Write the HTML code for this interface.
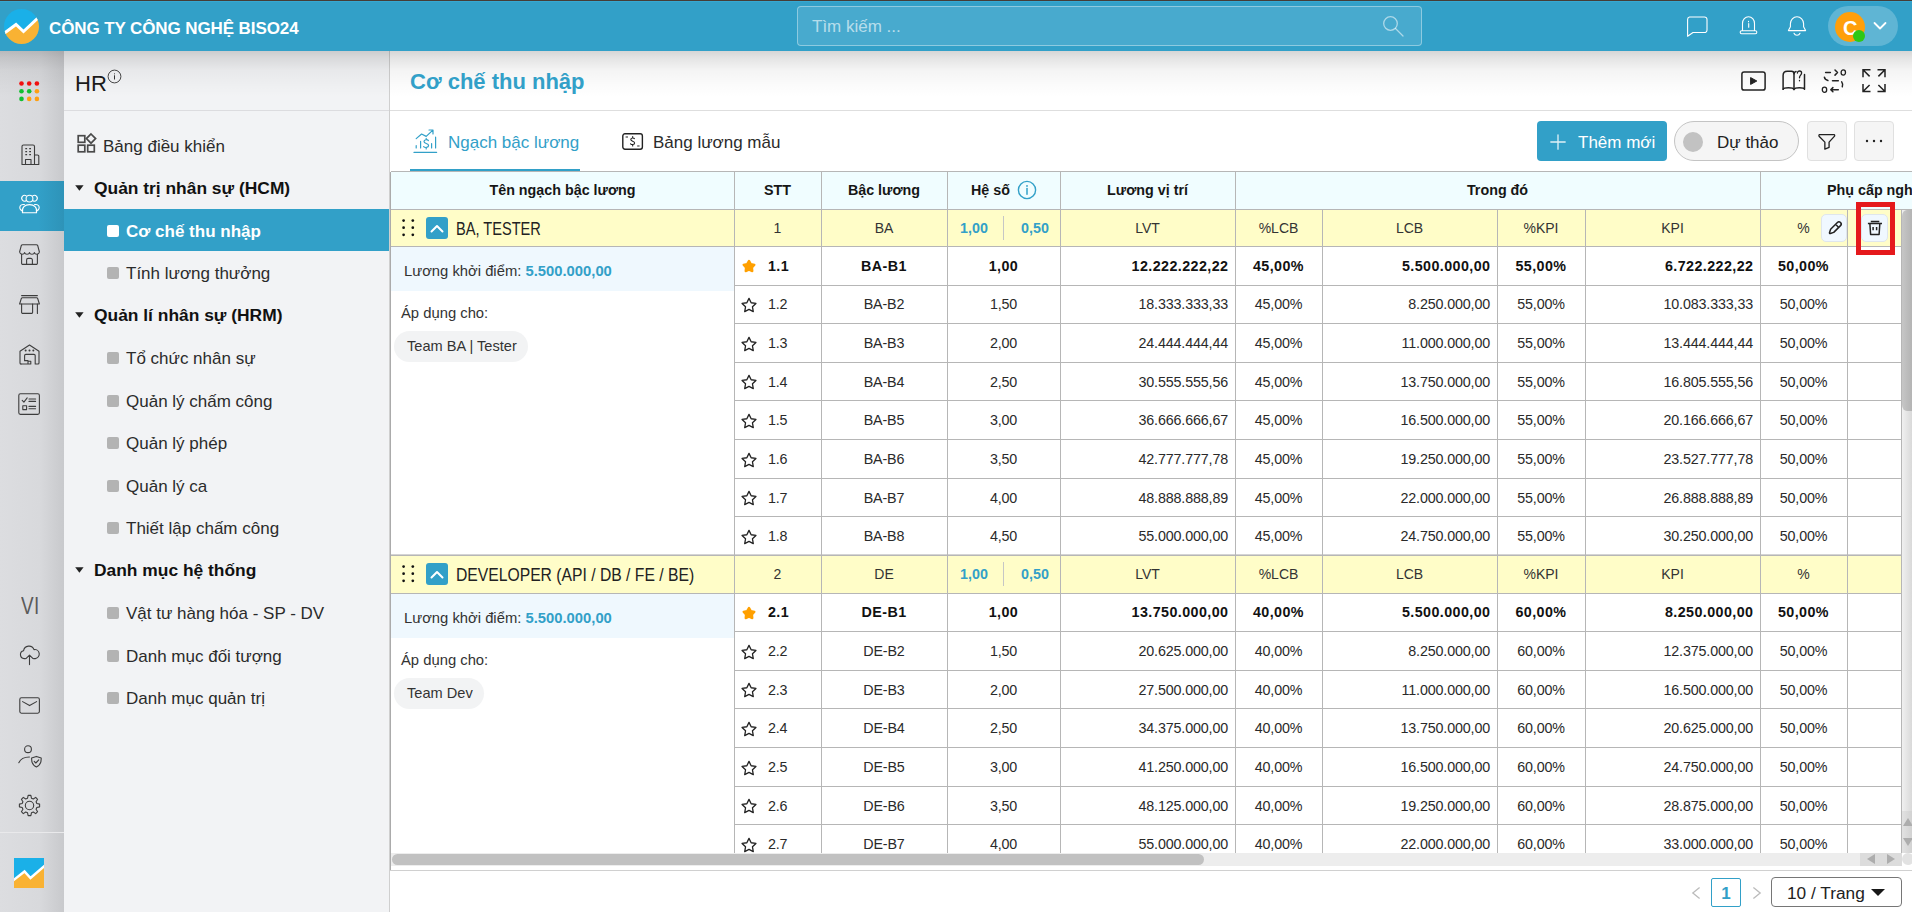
<!DOCTYPE html>
<html lang="vi"><head><meta charset="utf-8"><title>Cơ chế thu nhập</title>
<style>
*{box-sizing:border-box;margin:0;padding:0}
html,body{width:1912px;height:912px;overflow:hidden;background:#fff}
body{font-family:"Liberation Sans",sans-serif;color:#222;position:relative;font-size:14px}
.abs{position:absolute}
.t{position:absolute;white-space:nowrap;line-height:1}
svg{position:absolute;overflow:visible}
#top{left:0;top:0;width:1912px;height:51px;background:#32a0c8}
#topline{left:0;top:0;width:1912px;height:2px;background:linear-gradient(180deg,#463d37 0,#463d37 1px,#36a8d2 1px,#36a8d2 2px)}
#rail{left:0;top:51px;width:64px;height:861px;background:linear-gradient(90deg,#dcdde0 0%,#d8d9dc 62%,#c8c9cc 100%)}
#side{left:64px;top:51px;width:326px;height:861px;background:#f2f3f5;border-right:1px solid #cfcfcf}
#shadow{left:0;top:51px;width:1912px;height:46px;background:linear-gradient(180deg,rgba(0,0,0,.16) 0%,rgba(0,0,0,.11) 14%,rgba(0,0,0,.045) 42%,rgba(0,0,0,.015) 75%,rgba(0,0,0,0) 100%)}
.hl{position:absolute;height:1px;background:#b6b6b6}
.vl{position:absolute;width:1px;background:#b6b6b6}
.c{position:absolute;text-align:center;white-space:nowrap;font-size:14.3px;line-height:16px;color:#2a2a2a;letter-spacing:-0.15px}
.r{position:absolute;text-align:right;white-space:nowrap;font-size:14.3px;line-height:16px;color:#2a2a2a;letter-spacing:-0.15px}
.b{font-weight:700;color:#111}
.sq{position:absolute;width:12px;height:12px;border-radius:2px;background:#b3b3b3}
.mi{position:absolute;white-space:nowrap;font-size:17px;line-height:20px;color:#2b2b2b}
.mg{position:absolute;white-space:nowrap;font-size:17.4px;line-height:20px;color:#111;font-weight:700}
.caret{position:absolute;width:0;height:0;border-left:4.5px solid transparent;border-right:4.5px solid transparent;border-top:5.5px solid #222}

.b{font-weight:700;color:#111;letter-spacing:0.42px}
.r.b{margin-left:0.42px}

.hd{position:absolute;text-align:center;white-space:nowrap;font-size:14.3px;line-height:16px;font-weight:700;color:#161616}
.g{position:absolute;text-align:center;white-space:nowrap;font-size:14px;line-height:16px;color:#333}
.gt{position:absolute;white-space:nowrap;font-size:18px;line-height:20px;color:#222;transform-origin:0 50%}
.bl{color:#32a0c8;font-weight:700}
</style></head>
<body>
<div class="abs" id="top"></div><div class="abs" id="topline"></div>
<svg style="left:4px;top:9px" width="35" height="35" viewBox="0 0 35 35"><defs><clipPath id="lc"><circle cx="17.5" cy="17.5" r="17.5"/></clipPath></defs><g clip-path="url(#lc)"><rect width="35" height="35" fill="#1ab0e8"/><path d="M-1 25 L12 15.5 L19.5 22.5 L36 7 V36 H-1Z" fill="#f9b233"/><path d="M-1 25 L12 15.5 L19.5 22.5 L36 7" fill="none" stroke="#fff" stroke-width="3"/></g></svg>
<div class="t" style="left:49px;top:20px;font-size:17px;font-weight:700;color:#fff;letter-spacing:-0.1px">CÔNG TY CÔNG NGHỆ BISO24</div>
<div class="abs" style="left:797px;top:6px;width:625px;height:40px;border:1px solid rgba(255,255,255,.38);border-radius:4px;background:rgba(255,255,255,.11)"></div>
<div class="t" style="left:812px;top:18px;font-size:17px;color:rgba(255,255,255,.62)">Tìm kiếm ...</div>
<svg style="left:1382px;top:15px" width="22" height="22" viewBox="0 0 22 22"><circle cx="8.5" cy="8.5" r="6.8" fill="none" stroke="rgba(255,255,255,.55)" stroke-width="1.3"/><path d="M13.5 13.5 L21 21" stroke="rgba(255,255,255,.55)" stroke-width="1.3" stroke-linecap="round"/></svg>
<svg style="left:1686px;top:16px" width="22" height="22" viewBox="0 0 22 22"><path d="M3.5 1 H18.5 A2.5 2.5 0 0 1 21 3.5 V14 A2.5 2.5 0 0 1 18.5 16.5 H7 L1.6 20.3 V3.5 A2.5 2.5 0 0 1 3.5 1Z" fill="none" stroke="#fff" stroke-width="1.1" stroke-linecap="round" stroke-linejoin="round"/></svg>
<svg style="left:1738.5px;top:14.6px" width="19" height="20" viewBox="0 0 19 20"><path d="M3.5 15.5 V8.5 A6 6.8 0 0 1 15.5 8.5 V15.5" fill="none" stroke="#fff" stroke-width="1.1" stroke-linecap="round" stroke-linejoin="round"/><rect x="1.2" y="15.7" width="16.6" height="3" rx="1.4" fill="none" stroke="#fff" stroke-width="1.1" stroke-linecap="round" stroke-linejoin="round"/><path d="M9.7 8.6 V12.2 M9.5 6.3 v.4" fill="none" stroke="#fff" stroke-width="1.1" stroke-linecap="round" stroke-linejoin="round"/></svg>
<svg style="left:1787px;top:16px" width="20" height="22" viewBox="0 0 20 22"><path d="M1.4 14.6 H18.6 L16.6 10.8 V7.8 A6.6 7 0 0 0 3.4 7.8 V10.8 Z" fill="none" stroke="#fff" stroke-width="1.1" stroke-linecap="round" stroke-linejoin="round"/><path d="M7 17.2 A3.2 3.2 0 0 0 13 17.2" fill="none" stroke="#fff" stroke-width="1.1" stroke-linecap="round" stroke-linejoin="round"/></svg>
<div class="abs" style="left:1828px;top:6px;width:70px;height:40px;border-radius:20px;background:rgba(255,255,255,.22)"></div>
<div class="abs" style="left:1835px;top:12px;width:30px;height:30px;border-radius:15px;background:#ff9f0a"></div>
<div class="t" style="left:1843px;top:18px;font-size:20px;font-weight:700;color:#fff">C</div>
<div class="abs" style="left:1853px;top:30px;width:12px;height:12px;border-radius:6px;background:#2ec816"></div>
<svg style="left:1873px;top:21px" width="14" height="10" viewBox="0 0 14 10"><path d="M1.5 2 L7 7.5 L12.5 2" fill="none" stroke="#fff" stroke-width="1.8" stroke-linecap="round" stroke-linejoin="round"/></svg>
<div class="abs" id="rail"></div>
<div class="abs" id="side"></div>
<div class="abs" id="shadow"></div>
<div class="abs" style="left:0;top:181px;width:64px;height:50px;background:linear-gradient(90deg,#32a0c8 0%,#32a0c8 60%,#2e93b8 100%)"></div>
<svg style="left:19px;top:81px" width="21" height="21" viewBox="0 0 21 21"><circle cx="2.5" cy="2.5" r="2.3" fill="#f01010"/><circle cx="10.2" cy="2.5" r="2.3" fill="#f01010"/><circle cx="17.9" cy="2.5" r="2.3" fill="#f01010"/><circle cx="2.5" cy="10.2" r="2.3" fill="#10c030"/><circle cx="10.2" cy="10.2" r="2.3" fill="#10c030"/><circle cx="17.9" cy="10.2" r="2.3" fill="#ffa010"/><circle cx="2.5" cy="17.9" r="2.3" fill="#10c030"/><circle cx="10.2" cy="17.9" r="2.3" fill="#ffa010"/><circle cx="17.9" cy="17.9" r="2.3" fill="#ffa010"/></svg>
<svg style="left:20.5px;top:144px" width="19" height="22" viewBox="0 0 19 22"><path d="M1 20.5 V2.5 A1.5 1.5 0 0 1 2.5 1 H12 A1.5 1.5 0 0 1 13.5 2.5 V20.5 Z" fill="none" stroke="#3d3d3d" stroke-width="1.1" stroke-linecap="round" stroke-linejoin="round"/><path d="M13.5 11 H16.5 A1.3 1.3 0 0 1 17.8 12.3 V20.5 H13.5" fill="none" stroke="#3d3d3d" stroke-width="1.1" stroke-linecap="round" stroke-linejoin="round"/><path d="M4.5 20.5 V15.5 H10 V20.5" fill="none" stroke="#3d3d3d" stroke-width="1.1" stroke-linecap="round" stroke-linejoin="round"/><path d="M4.3 4.7h1.8M8.2 4.7h1.8M4.3 7.7h1.8M8.2 7.7h1.8M4.3 10.7h1.8M8.2 10.7h1.8" stroke="#3d3d3d" stroke-width="1.3" fill="none"/></svg>
<svg style="left:19px;top:194px" width="21" height="20" viewBox="0 0 21 20"><circle cx="10.5" cy="4.6" r="3.4" fill="none" stroke="#fff" stroke-width="1.1" stroke-linecap="round" stroke-linejoin="round"/><path d="M7.1 1.8 A2.9 2.9 0 1 0 7.1 6.8" fill="none" stroke="#fff" stroke-width="1.1" stroke-linecap="round" stroke-linejoin="round"/><path d="M13.9 1.8 A2.9 2.9 0 1 1 13.9 6.8" fill="none" stroke="#fff" stroke-width="1.1" stroke-linecap="round" stroke-linejoin="round"/><path d="M3.5 18.8 C2.5 13 6 10.6 10.5 10.6 C15 10.6 18.5 13 17.5 18.8 Z" fill="none" stroke="#fff" stroke-width="1.1" stroke-linecap="round" stroke-linejoin="round"/><path d="M3.2 16.6 C1 16 0.3 13.8 1.2 12 C2 10.6 3.6 10.2 5.4 10.6" fill="none" stroke="#fff" stroke-width="1.1" stroke-linecap="round" stroke-linejoin="round"/><path d="M17.8 16.6 C20 16 20.7 13.8 19.8 12 C19 10.6 17.4 10.2 15.6 10.6" fill="none" stroke="#fff" stroke-width="1.1" stroke-linecap="round" stroke-linejoin="round"/></svg>
<svg style="left:19px;top:244px" width="21" height="21" viewBox="0 0 21 21"><path d="M3.6 0.8 H17.4 Q18.4 0.8 18.8 1.8 L20.4 8 Q20 10.2 17.9 10.2 Q15.8 10.2 15.4 8.6 Q15 10.2 12.95 10.2 Q10.9 10.2 10.5 8.6 Q10.1 10.2 8.05 10.2 Q6 10.2 5.6 8.6 Q5.2 10.2 3.1 10.2 Q1 10.2 0.6 8 L2.2 1.8 Q2.6 0.8 3.6 0.8Z" fill="none" stroke="#3d3d3d" stroke-width="1.1" stroke-linecap="round" stroke-linejoin="round"/><path d="M2.6 10.2 V19.2 A1.2 1.2 0 0 0 3.8 20.4 H17.2 A1.2 1.2 0 0 0 18.4 19.2 V10.2" fill="none" stroke="#3d3d3d" stroke-width="1.1" stroke-linecap="round" stroke-linejoin="round"/><path d="M7.6 20.4 V16 A1.6 1.6 0 0 1 9.2 14.4 H11.8 A1.6 1.6 0 0 1 13.4 16 V20.4" fill="none" stroke="#3d3d3d" stroke-width="1.1" stroke-linecap="round" stroke-linejoin="round"/></svg>
<svg style="left:19px;top:295px" width="21" height="19" viewBox="0 0 21 19"><path d="M2.6 0.6 H18.4" fill="none" stroke="#3d3d3d" stroke-width="1.1" stroke-linecap="round" stroke-linejoin="round"/><path d="M3.4 2.8 H17.6 Q18.4 2.8 18.8 3.8 L20.4 9 H0.6 L2.2 3.8 Q2.6 2.8 3.4 2.8 Z" fill="none" stroke="#3d3d3d" stroke-width="1.1" stroke-linecap="round" stroke-linejoin="round"/><path d="M2.6 9 V17.2 A1.2 1.2 0 0 0 3.8 18.4 H12.4 A1.2 1.2 0 0 0 13.6 17.2 V9" fill="none" stroke="#3d3d3d" stroke-width="1.1" stroke-linecap="round" stroke-linejoin="round"/><path d="M18.4 9 V18.4" fill="none" stroke="#3d3d3d" stroke-width="1.1" stroke-linecap="round" stroke-linejoin="round"/></svg>
<svg style="left:19px;top:344px" width="21" height="21" viewBox="0 0 21 21"><path d="M2 20 Q1 20 1 19 V7.2 L10.5 1 L20 7.2 V19 Q20 20 19 20 H16.2 V11.6 Q16.2 10.4 15 10.4 H6.8 Q5.6 10.4 5.6 11.6 V16.6" fill="none" stroke="#3d3d3d" stroke-width="1.1" stroke-linecap="round" stroke-linejoin="round"/><path d="M2 20 H11.8 V17.2 H9 M5.6 16.6 H9 V20" fill="none" stroke="#3d3d3d" stroke-width="1.1" stroke-linecap="round" stroke-linejoin="round"/><path d="M6.6 6.5h.1M10.45 6.5h.1M14.3 6.5h.1" stroke="#3d3d3d" stroke-width="1.9" stroke-linecap="round" fill="none"/></svg>
<svg style="left:18px;top:393px" width="22.2" height="22.2" viewBox="0 0 22.2 22.2"><rect x="0.8" y="0.8" width="20.6" height="20.6" rx="1.6" fill="none" stroke="#3d3d3d" stroke-width="1.1" stroke-linecap="round" stroke-linejoin="round"/><path d="M4.2 7.4 L5.9 9.1 L9.2 4.9" fill="none" stroke="#3d3d3d" stroke-width="1.1" stroke-linecap="round" stroke-linejoin="round"/><path d="M11 6 H17.6 M11 8.4 H17.6" fill="none" stroke="#3d3d3d" stroke-width="1.1" stroke-linecap="round" stroke-linejoin="round"/><rect x="4.8" y="12.8" width="3.8" height="3.8" fill="none" stroke="#3d3d3d" stroke-width="1.1" stroke-linecap="round" stroke-linejoin="round"/><path d="M11 13.4 H17.6 M11 15.8 H17.6" fill="none" stroke="#3d3d3d" stroke-width="1.1" stroke-linecap="round" stroke-linejoin="round"/></svg>
<svg style="left:19px;top:646px" width="21" height="19" viewBox="0 0 21 19"><path d="M6.5 12.6 H5.2 A4 4 0 0 1 4.6 4.7 A5.4 5.4 0 0 1 15 3.6 A4.5 4.5 0 0 1 16.4 12.6 H14.5" fill="none" stroke="#3d3d3d" stroke-width="1.1" stroke-linecap="round" stroke-linejoin="round"/><path d="M10.5 18.6 V9.4 M7.2 12.4 L10.5 9.2 L13.8 12.4" fill="none" stroke="#3d3d3d" stroke-width="1.1" stroke-linecap="round" stroke-linejoin="round"/></svg>
<svg style="left:19px;top:697px" width="21.2" height="17" viewBox="0 0 21.2 17"><rect x="0.8" y="0.8" width="19.6" height="15.4" rx="1.6" fill="none" stroke="#3d3d3d" stroke-width="1.1" stroke-linecap="round" stroke-linejoin="round"/><path d="M3.6 4.6 L10.6 8.6 L17.6 4.6" fill="none" stroke="#3d3d3d" stroke-width="1.1" stroke-linecap="round" stroke-linejoin="round"/></svg>
<svg style="left:17.5px;top:745px" width="24.5" height="23" viewBox="0 0 24.5 23"><circle cx="10" cy="4.2" r="3.4" fill="none" stroke="#3d3d3d" stroke-width="1.1" stroke-linecap="round" stroke-linejoin="round"/><path d="M0.8 17.8 C2.6 13.8 6 12 11.4 12" fill="none" stroke="#3d3d3d" stroke-width="1.1" stroke-linecap="round" stroke-linejoin="round"/><path d="M18.4 11.4 L23.2 13 C23.4 18 21.6 20.6 18.4 22 C15.2 20.6 13.4 18 13.6 13 Z" fill="none" stroke="#3d3d3d" stroke-width="1.1" stroke-linecap="round" stroke-linejoin="round"/><path d="M16.2 16.4 L17.8 18 L20.8 14.8" fill="none" stroke="#3d3d3d" stroke-width="1.1" stroke-linecap="round" stroke-linejoin="round"/></svg>
<svg style="left:19px;top:795px" width="21" height="21" viewBox="0 0 21 21"><path d="M9.14 0.39 L11.86 0.39 L12.45 3.15 L14.32 3.93 L16.69 2.39 L18.61 4.31 L17.07 6.68 L17.85 8.55 L20.61 9.14 L20.61 11.86 L17.85 12.45 L17.07 14.32 L18.61 16.69 L16.69 18.61 L14.32 17.07 L12.45 17.85 L11.86 20.61 L9.14 20.61 L8.55 17.85 L6.68 17.07 L4.31 18.61 L2.39 16.69 L3.93 14.32 L3.15 12.45 L0.39 11.86 L0.39 9.14 L3.15 8.55 L3.93 6.68 L2.39 4.31 L4.31 2.39 L6.68 3.93 L8.55 3.15Z" fill="none" stroke="#3d3d3d" stroke-width="1.1" stroke-linecap="round" stroke-linejoin="round"/><circle cx="10.5" cy="10.5" r="4.2" fill="none" stroke="#3d3d3d" stroke-width="1.1" stroke-linecap="round" stroke-linejoin="round"/></svg>
<div class="t" style="left:21px;top:595px;font-size:23px;color:#5a5a5a;letter-spacing:0.5px;transform:scaleX(.82);transform-origin:0 0">VI</div>
<div class="abs" style="left:0;top:832px;width:64px;height:1px;background:#e9e9eb"></div>
<svg style="left:14px;top:858px" width="30" height="30" viewBox="0 0 30 30"><defs><clipPath id="ls"><rect width="30" height="30"/></clipPath></defs><g clip-path="url(#ls)"><rect width="30" height="30" fill="#1ab0e8"/><path d="M-1 22.5 L10.5 13.5 L16.5 20 L31 7.5 V31 H-1Z" fill="#f9b233"/><path d="M-1 22.5 L10.5 13.5 L16.5 20 L31 7.5" fill="none" stroke="#fff" stroke-width="2.4"/></g></svg>
<div class="t" style="left:75px;top:73px;font-size:22px;color:#1a1a1a">HR</div>
<svg style="left:107px;top:69px" width="15" height="15" viewBox="0 0 15 15"><circle cx="7.5" cy="7.5" r="6.4" fill="none" stroke="#333" stroke-width="0.9"/><path d="M7.5 6.3v4.2M7.5 4.4v.9" stroke="#333" stroke-width="1" fill="none"/></svg>
<div class="abs" style="left:64px;top:110px;width:325px;height:1px;background:#dcdcdf"></div>
<svg style="left:77px;top:133px" width="20" height="20" viewBox="0 0 20 20"><rect x="1.2" y="2.7" width="6.6" height="6.6" fill="none" stroke="#4a4a4a" stroke-width="1.7" stroke-linecap="round" stroke-linejoin="miter"/><rect x="1.2" y="12.2" width="6.6" height="6.6" fill="none" stroke="#4a4a4a" stroke-width="1.7" stroke-linecap="round" stroke-linejoin="miter"/><rect x="10.7" y="12.2" width="6.6" height="6.6" fill="none" stroke="#4a4a4a" stroke-width="1.7" stroke-linecap="round" stroke-linejoin="miter"/><path d="M14 1 L18.6 5.6 L14 10.2 L9.4 5.6Z" fill="none" stroke="#4a4a4a" stroke-width="1.7" stroke-linecap="round" stroke-linejoin="miter"/></svg>
<div class="mi" style="left:103px;top:137px">Bảng điều khiển</div>
<div class="abs" style="left:64px;top:209px;width:325px;height:42px;background:#32a0c8"></div>
<svg style="left:75px;top:185.2px" width="9" height="6" viewBox="0 0 9 6"><path d="M0.2 0.3 H8.6 L4.4 5.7Z" fill="#222"/></svg>
<div class="mg" style="left:94px;top:178px">Quản trị nhân sự (HCM)</div>
<div class="sq" style="left:107px;top:225px;background:#fff"></div>
<div class="mi" style="left:126px;top:222px;color:#fff;font-weight:700;letter-spacing:0">Cơ chế thu nhập</div>
<div class="sq" style="left:107px;top:267px"></div>
<div class="mi" style="left:126px;top:264px">Tính lương thưởng</div>
<svg style="left:75px;top:312.2px" width="9" height="6" viewBox="0 0 9 6"><path d="M0.2 0.3 H8.6 L4.4 5.7Z" fill="#222"/></svg>
<div class="mg" style="left:94px;top:305px">Quản lí nhân sự (HRM)</div>
<div class="sq" style="left:107px;top:352px"></div>
<div class="mi" style="left:126px;top:349px">Tổ chức nhân sự</div>
<div class="sq" style="left:107px;top:395px"></div>
<div class="mi" style="left:126px;top:392px">Quản lý chấm công</div>
<div class="sq" style="left:107px;top:437px"></div>
<div class="mi" style="left:126px;top:434px">Quản lý phép</div>
<div class="sq" style="left:107px;top:480px"></div>
<div class="mi" style="left:126px;top:477px">Quản lý ca</div>
<div class="sq" style="left:107px;top:522px"></div>
<div class="mi" style="left:126px;top:519px">Thiết lập chấm công</div>
<svg style="left:75px;top:567.2px" width="9" height="6" viewBox="0 0 9 6"><path d="M0.2 0.3 H8.6 L4.4 5.7Z" fill="#222"/></svg>
<div class="mg" style="left:94px;top:560px">Danh mục hệ thống</div>
<div class="sq" style="left:107px;top:607px"></div>
<div class="mi" style="left:126px;top:604px">Vật tư hàng hóa - SP - DV</div>
<div class="sq" style="left:107px;top:650px"></div>
<div class="mi" style="left:126px;top:647px">Danh mục đối tượng</div>
<div class="sq" style="left:107px;top:692px"></div>
<div class="mi" style="left:126px;top:689px">Danh mục quản trị</div>
<div class="t" style="left:410px;top:71px;font-size:22px;font-weight:700;color:#32a0c8">Cơ chế thu nhập</div>
<div class="abs" style="left:390px;top:110px;width:1522px;height:1px;background:#dedede"></div>
<svg style="left:1741.4px;top:71px" width="25" height="20" viewBox="0 0 25 20"><rect x="0.9" y="0.9" width="23.2" height="18.2" rx="2.2" fill="none" stroke="#222" stroke-width="1.5" stroke-linecap="round" stroke-linejoin="round"/><path d="M9.6 6.6 L15.8 10 L9.6 13.4Z" fill="#222" stroke="#222" stroke-width="1" stroke-linejoin="round"/></svg>
<svg style="left:1782px;top:70px" width="24" height="21.5" viewBox="0 0 24 21.5"><path d="M1.1 19.3 V5.5 Q1.1 1.3 5.3 1.3 H9.5 Q12 1.3 12 3.8 V19.4" fill="none" stroke="#222" stroke-width="1.5" stroke-linecap="round" stroke-linejoin="round"/><path d="M1.1 19.3 Q1.6 17.7 6.5 17.7 Q11.4 17.7 12 19.6 Q12.6 17.7 17.4 17.7 Q22 17.7 22.5 19.3 V4.4" fill="none" stroke="#222" stroke-width="1.5" stroke-linecap="round" stroke-linejoin="round"/><path d="M12 3.8 Q12.3 1.9 14 1.5" fill="none" stroke="#222" stroke-width="1.5" stroke-linecap="round" stroke-linejoin="round"/><path d="M15.4 3 C15.4 0.3 19.6 0.3 19.6 3 C19.6 5.2 17.5 5.2 17.5 7.8 M17.5 10.5 v0.3" fill="none" stroke="#222" stroke-width="1.3" stroke-linecap="round" stroke-linejoin="round"/></svg>
<svg style="left:1821px;top:69px" width="25.5" height="24" viewBox="0 0 25.5 24"><ellipse cx="22.3" cy="3.55" rx="2.2" ry="2.6" fill="none" stroke="#222" stroke-width="1.3" stroke-linecap="round" stroke-linejoin="round"/><ellipse cx="3.5" cy="20.7" rx="2.2" ry="2.6" fill="none" stroke="#222" stroke-width="1.3" stroke-linecap="round" stroke-linejoin="round"/><path d="M4.6 3.55 H9.4 M14 1 L16.5 3.55 L14 6.1 M3.4 8.2 Q3.8 10.8 6.9 11.5 M11.5 11.75 H17.3 M20.7 12.9 Q22.3 15 21.3 17.8 M10 20.7 H17.3 M11.9 18.6 L9.8 20.7 L11.9 22.8" fill="none" stroke="#222" stroke-width="1.5" stroke-linecap="round" stroke-linejoin="round"/></svg>
<svg style="left:1862px;top:68.8px" width="24" height="23.4" viewBox="0 0 24 23.4"><path d="M1 8.3 V0.8 H8.5 M1 0.8 L7.6 7.4" fill="none" stroke="#222" stroke-width="1.5" stroke-linecap="butt" stroke-linejoin="miter"/><path d="M15.5 0.8 H23 V8.3 M23 0.8 L16.4 7.4" fill="none" stroke="#222" stroke-width="1.5" stroke-linecap="butt" stroke-linejoin="miter"/><path d="M1 15.1 V22.6 H8.5 M1 22.6 L7.6 16" fill="none" stroke="#222" stroke-width="1.5" stroke-linecap="butt" stroke-linejoin="miter"/><path d="M15.5 22.6 H23 V15.1 M23 22.6 L16.4 16" fill="none" stroke="#222" stroke-width="1.5" stroke-linecap="butt" stroke-linejoin="miter"/></svg>
<svg style="left:413px;top:129px" width="25" height="25" viewBox="0 0 25 25"><path d="M1 23.4 H23.6" fill="none" stroke="#32a0c8" stroke-width="1.2" stroke-linecap="round" stroke-linejoin="round"/><path d="M3.2 19 V16.6 M7.6 19 V12.4 M18.6 19 V14.6 M22.6 19 V8.2" fill="none" stroke="#32a0c8" stroke-width="1.2" stroke-linecap="round" stroke-linejoin="round"/><path d="M3.2 9.6 L8.6 5 L13.2 7.4 L19.6 1.4 M16 1 H20 V5" fill="none" stroke="#32a0c8" stroke-width="1.2" stroke-linecap="round" stroke-linejoin="round"/><path d="M15.4 11.6 C14.6 10.4 11 10.2 11 12.6 C11 15 15.6 14 15.6 16.6 C15.6 19 11.6 18.8 10.6 17.6 M13.2 9.4 V10.6 M13.2 18.8 V20" fill="none" stroke="#32a0c8" stroke-width="1.2" stroke-linecap="round" stroke-linejoin="round"/></svg>
<div class="t" style="left:448px;top:134px;font-size:17px;color:#32a0c8">Ngạch bậc lương</div>
<div class="abs" style="left:410px;top:169px;width:170px;height:2px;background:#32a0c8"></div>
<svg style="left:622px;top:133px" width="21.2" height="17" viewBox="0 0 21.2 17"><rect x="0.8" y="0.8" width="19.6" height="15.4" rx="2.2" fill="none" stroke="#222" stroke-width="1.4" stroke-linecap="round" stroke-linejoin="round"/><path d="M3.6 4 H6" stroke="#222" stroke-width="1" fill="none"/><path d="M15.2 13 H17.6" stroke="#222" stroke-width="1" fill="none"/><path d="M12.4 5.6 C11.8 4.6 8.8 4.6 8.8 6.6 C8.8 8.6 12.6 7.8 12.6 10 C12.6 12 9.4 11.8 8.6 10.8 M10.7 3.6 V4.8 M10.7 11.8 V13" stroke="#222" stroke-width="1.1" fill="none" stroke-linecap="round"/></svg>
<div class="t" style="left:653px;top:134px;font-size:17px;color:#2b2b2b">Bảng lương mẫu</div>
<div class="abs" style="left:1537px;top:121px;width:130px;height:40px;border-radius:4px;background:#32a0c8"></div>
<svg style="left:1550px;top:134px" width="16" height="16" viewBox="0 0 16 16"><path d="M8 0.8v14.4M0.8 8h14.4" stroke="rgba(255,255,255,.85)" stroke-width="1.3" stroke-linecap="round"/></svg>
<div class="t" style="left:1578px;top:134px;font-size:17px;color:#fff">Thêm mới</div>
<div class="abs" style="left:1674px;top:121px;width:125px;height:40px;border-radius:20px;background:#f5f5f5;border:1px solid #c4c4c4"></div>
<div class="abs" style="left:1683px;top:132px;width:20px;height:20px;border-radius:10px;background:#c2c2c2"></div>
<div class="t" style="left:1717px;top:134px;font-size:17px;color:#222">Dự thảo</div>
<div class="abs" style="left:1807px;top:121px;width:40px;height:40px;border-radius:4px;background:#f5f5f5;border:1px solid #e0e0e0"></div>
<div class="abs" style="left:1854px;top:121px;width:40px;height:40px;border-radius:4px;background:#f5f5f5;border:1px solid #e0e0e0"></div>
<svg style="left:1818px;top:132.6px" width="17.6" height="17.6" viewBox="0 0 20 20"><path d="M1.6 1.8 H18.4 Q19.4 2.4 18.8 3.6 L12.6 10.4 V16.4 L7.8 18.4 V10.4 L1.2 3.6 Q0.6 2.4 1.6 1.8Z" fill="none" stroke="#222" stroke-width="1.5" stroke-linecap="round" stroke-linejoin="round"/></svg>
<svg style="left:1864px;top:139px" width="20" height="4" viewBox="0 0 20 4"><circle cx="3" cy="2" r="1.2" fill="#222"/><circle cx="10" cy="2" r="1.2" fill="#222"/><circle cx="17" cy="2" r="1.2" fill="#222"/></svg>
<div class="abs" style="left:391px;top:172px;width:1521px;height:37px;background:#f0fdff"></div>
<div class="hd" style="left:391px;width:343px;top:182px;">Tên ngạch bậc lương</div>
<div class="hd" style="left:734px;width:87px;top:182px;">STT</div>
<div class="hd" style="left:821px;width:126px;top:182px;">Bậc lương</div>
<div class="hd" style="left:971px;top:182px;text-align:left">Hệ số</div>
<svg style="left:1017px;top:180px" width="20" height="20" viewBox="0 0 20 20"><circle cx="10" cy="10" r="8.6" fill="none" stroke="#32a0c8" stroke-width="1.4"/><path d="M10 8.6 V14.2" stroke="#32a0c8" stroke-width="1.5" stroke-linecap="round"/><circle cx="10" cy="5.9" r="0.95" fill="#32a0c8"/></svg>
<div class="hd" style="left:1060px;width:175px;top:182px;">Lương vị trí</div>
<div class="hd" style="left:1235px;width:525px;top:182px;">Trong đó</div>
<div class="hd" style="left:1827px;top:182px;text-align:left">Phụ cấp ngh</div>
<div class="abs" style="left:391px;top:210px;width:1510px;height:36px;background:#fffdc8"></div>
<svg style="left:402px;top:219px" width="13" height="18" viewBox="0 0 13 18"><circle cx="1.6" cy="1.6" r="1.35" fill="#111"/><circle cx="10.799999999999999" cy="1.6" r="1.35" fill="#111"/><circle cx="1.6" cy="8.7" r="1.35" fill="#111"/><circle cx="10.799999999999999" cy="8.7" r="1.35" fill="#111"/><circle cx="1.6" cy="15.799999999999999" r="1.35" fill="#111"/><circle cx="10.799999999999999" cy="15.799999999999999" r="1.35" fill="#111"/></svg>
<div class="abs" style="left:426px;top:217px;width:22px;height:22px;border-radius:3px;background:#32a0c8"></div>
<svg style="left:430px;top:224px" width="14" height="9" viewBox="0 0 14 9"><path d="M1.5 7.5 L7 2 L12.5 7.5" fill="none" stroke="#fff" stroke-width="2" stroke-linecap="round" stroke-linejoin="round"/></svg>
<div class="gt" style="left:456px;top:219px;transform:scaleX(0.81)">BA, TESTER</div>
<div class="g" style="left:734px;width:87px;top:220px;">1</div>
<div class="g" style="left:821px;width:126px;top:220px;">BA</div>
<div class="g bl" style="left:954px;width:40px;top:220px;font-size:14.3px">1,00</div>
<div class="abs" style="left:1003px;top:216px;width:1px;height:24px;background:#c6c6c6"></div>
<div class="g bl" style="left:1015px;width:40px;top:220px;font-size:14.3px">0,50</div>
<div class="g" style="left:1060px;width:175px;top:220px;">LVT</div>
<div class="g" style="left:1235px;width:87px;top:220px;">%LCB</div>
<div class="g" style="left:1322px;width:175px;top:220px;">LCB</div>
<div class="g" style="left:1497px;width:88px;top:220px;">%KPI</div>
<div class="g" style="left:1585px;width:175px;top:220px;">KPI</div>
<div class="g" style="left:1760px;width:87px;top:220px;">%</div>
<div class="abs" style="left:1821px;top:214px;width:26px;height:28px;border-radius:5px;background:#f0f8ff;border:1px solid #dfe6ec"></div>
<svg style="left:1827px;top:220px" width="16" height="16" viewBox="0 0 16 16"><g transform="rotate(45 8 8)"><path d="M5.8 12 V2.4 A2.2 2.2 0 0 1 10.2 2.4 V12 L8.6 15.2 Q8 16 7.4 15.2 Z M5.8 5 H10.2" fill="none" stroke="#222" stroke-width="1.5" stroke-linecap="round" stroke-linejoin="round"/></g></svg>
<div class="abs" style="left:1861px;top:214px;width:27px;height:28px;border-radius:5px;background:#f0f8ff;border:1px solid #dfe6ec"></div>
<svg style="left:1867px;top:220px" width="16" height="16" viewBox="0 0 16 16"><path d="M3.8 1.5 H12.3 M0.9 3.6 H15 M2.9 3.8 L3.6 14.5 H12.1 L12.8 3.8 M6.1 7.1 V10.3 M9.6 7.1 V10.3" fill="none" stroke="#222" stroke-width="1.5" stroke-linecap="butt" stroke-linejoin="round"/></svg>
<div class="abs" style="left:391px;top:247px;width:343px;height:44px;background:#eff8fe"></div>
<div class="t" style="left:404px;top:264px;font-size:14.8px;color:#333">Lương khởi điểm: <b style="color:#32a0c8">5.500.000,00</b></div>
<div class="t" style="left:401px;top:306px;font-size:14.8px;color:#333">Áp dụng cho:</div>
<div class="abs" style="left:394px;top:331px;width:134px;height:31px;border-radius:16px;background:#f2f3f4"></div>
<div class="t" style="left:407px;top:339px;font-size:14.6px;color:#333">Team BA | Tester</div>
<svg style="left:738.5px;top:256.3px" width="20" height="20" viewBox="0 0 20 20"><path d="M10.00 4.84 L11.88 7.96 L15.42 8.78 L13.04 11.53 L13.35 15.16 L10.00 13.74 L6.65 15.16 L6.96 11.53 L4.58 8.78 L8.12 7.96Z" fill="#ffa000" stroke="#ffa000" stroke-width="2.2" stroke-linejoin="round"/></svg>
<div class="c b" style="left:768px;top:258px;text-align:left">1.1</div>
<div class="c b" style="left:821px;width:126px;top:258px;">BA-B1</div>
<div class="c b" style="left:947px;width:113px;top:258px;">1,00</div>
<div class="r b" style="left:1068px;width:160px;top:258px">12.222.222,22</div>
<div class="c b" style="left:1235px;width:87px;top:258px;">45,00%</div>
<div class="r b" style="left:1330px;width:160px;top:258px">5.500.000,00</div>
<div class="c b" style="left:1497px;width:88px;top:258px;">55,00%</div>
<div class="r b" style="left:1593px;width:160px;top:258px">6.722.222,22</div>
<div class="c b" style="left:1760px;width:87px;top:258px;">50,00%</div>
<svg style="left:738.8px;top:295.3px" width="20" height="20" viewBox="0 0 20 20"><path d="M10.00 3.40 L12.15 7.74 L16.94 8.44 L13.47 11.83 L14.29 16.60 L10.00 14.35 L5.71 16.60 L6.53 11.83 L3.06 8.44 L7.85 7.74Z" fill="none" stroke="#222" stroke-width="1.3" stroke-linejoin="round"/></svg>
<div class="c" style="left:768px;top:296px;text-align:left">1.2</div>
<div class="c" style="left:821px;width:126px;top:296px;">BA-B2</div>
<div class="c" style="left:947px;width:113px;top:296px;">1,50</div>
<div class="r" style="left:1068px;width:160px;top:296px">18.333.333,33</div>
<div class="c" style="left:1235px;width:87px;top:296px;">45,00%</div>
<div class="r" style="left:1330px;width:160px;top:296px">8.250.000,00</div>
<div class="c" style="left:1497px;width:88px;top:296px;">55,00%</div>
<div class="r" style="left:1593px;width:160px;top:296px">10.083.333,33</div>
<div class="c" style="left:1760px;width:87px;top:296px;">50,00%</div>
<svg style="left:738.8px;top:333.8px" width="20" height="20" viewBox="0 0 20 20"><path d="M10.00 3.40 L12.15 7.74 L16.94 8.44 L13.47 11.83 L14.29 16.60 L10.00 14.35 L5.71 16.60 L6.53 11.83 L3.06 8.44 L7.85 7.74Z" fill="none" stroke="#222" stroke-width="1.3" stroke-linejoin="round"/></svg>
<div class="c" style="left:768px;top:335px;text-align:left">1.3</div>
<div class="c" style="left:821px;width:126px;top:335px;">BA-B3</div>
<div class="c" style="left:947px;width:113px;top:335px;">2,00</div>
<div class="r" style="left:1068px;width:160px;top:335px">24.444.444,44</div>
<div class="c" style="left:1235px;width:87px;top:335px;">45,00%</div>
<div class="r" style="left:1330px;width:160px;top:335px">11.000.000,00</div>
<div class="c" style="left:1497px;width:88px;top:335px;">55,00%</div>
<div class="r" style="left:1593px;width:160px;top:335px">13.444.444,44</div>
<div class="c" style="left:1760px;width:87px;top:335px;">50,00%</div>
<svg style="left:738.8px;top:372.3px" width="20" height="20" viewBox="0 0 20 20"><path d="M10.00 3.40 L12.15 7.74 L16.94 8.44 L13.47 11.83 L14.29 16.60 L10.00 14.35 L5.71 16.60 L6.53 11.83 L3.06 8.44 L7.85 7.74Z" fill="none" stroke="#222" stroke-width="1.3" stroke-linejoin="round"/></svg>
<div class="c" style="left:768px;top:374px;text-align:left">1.4</div>
<div class="c" style="left:821px;width:126px;top:374px;">BA-B4</div>
<div class="c" style="left:947px;width:113px;top:374px;">2,50</div>
<div class="r" style="left:1068px;width:160px;top:374px">30.555.555,56</div>
<div class="c" style="left:1235px;width:87px;top:374px;">45,00%</div>
<div class="r" style="left:1330px;width:160px;top:374px">13.750.000,00</div>
<div class="c" style="left:1497px;width:88px;top:374px;">55,00%</div>
<div class="r" style="left:1593px;width:160px;top:374px">16.805.555,56</div>
<div class="c" style="left:1760px;width:87px;top:374px;">50,00%</div>
<svg style="left:738.8px;top:410.8px" width="20" height="20" viewBox="0 0 20 20"><path d="M10.00 3.40 L12.15 7.74 L16.94 8.44 L13.47 11.83 L14.29 16.60 L10.00 14.35 L5.71 16.60 L6.53 11.83 L3.06 8.44 L7.85 7.74Z" fill="none" stroke="#222" stroke-width="1.3" stroke-linejoin="round"/></svg>
<div class="c" style="left:768px;top:412px;text-align:left">1.5</div>
<div class="c" style="left:821px;width:126px;top:412px;">BA-B5</div>
<div class="c" style="left:947px;width:113px;top:412px;">3,00</div>
<div class="r" style="left:1068px;width:160px;top:412px">36.666.666,67</div>
<div class="c" style="left:1235px;width:87px;top:412px;">45,00%</div>
<div class="r" style="left:1330px;width:160px;top:412px">16.500.000,00</div>
<div class="c" style="left:1497px;width:88px;top:412px;">55,00%</div>
<div class="r" style="left:1593px;width:160px;top:412px">20.166.666,67</div>
<div class="c" style="left:1760px;width:87px;top:412px;">50,00%</div>
<svg style="left:738.8px;top:449.8px" width="20" height="20" viewBox="0 0 20 20"><path d="M10.00 3.40 L12.15 7.74 L16.94 8.44 L13.47 11.83 L14.29 16.60 L10.00 14.35 L5.71 16.60 L6.53 11.83 L3.06 8.44 L7.85 7.74Z" fill="none" stroke="#222" stroke-width="1.3" stroke-linejoin="round"/></svg>
<div class="c" style="left:768px;top:451px;text-align:left">1.6</div>
<div class="c" style="left:821px;width:126px;top:451px;">BA-B6</div>
<div class="c" style="left:947px;width:113px;top:451px;">3,50</div>
<div class="r" style="left:1068px;width:160px;top:451px">42.777.777,78</div>
<div class="c" style="left:1235px;width:87px;top:451px;">45,00%</div>
<div class="r" style="left:1330px;width:160px;top:451px">19.250.000,00</div>
<div class="c" style="left:1497px;width:88px;top:451px;">55,00%</div>
<div class="r" style="left:1593px;width:160px;top:451px">23.527.777,78</div>
<div class="c" style="left:1760px;width:87px;top:451px;">50,00%</div>
<svg style="left:738.8px;top:488.3px" width="20" height="20" viewBox="0 0 20 20"><path d="M10.00 3.40 L12.15 7.74 L16.94 8.44 L13.47 11.83 L14.29 16.60 L10.00 14.35 L5.71 16.60 L6.53 11.83 L3.06 8.44 L7.85 7.74Z" fill="none" stroke="#222" stroke-width="1.3" stroke-linejoin="round"/></svg>
<div class="c" style="left:768px;top:490px;text-align:left">1.7</div>
<div class="c" style="left:821px;width:126px;top:490px;">BA-B7</div>
<div class="c" style="left:947px;width:113px;top:490px;">4,00</div>
<div class="r" style="left:1068px;width:160px;top:490px">48.888.888,89</div>
<div class="c" style="left:1235px;width:87px;top:490px;">45,00%</div>
<div class="r" style="left:1330px;width:160px;top:490px">22.000.000,00</div>
<div class="c" style="left:1497px;width:88px;top:490px;">55,00%</div>
<div class="r" style="left:1593px;width:160px;top:490px">26.888.888,89</div>
<div class="c" style="left:1760px;width:87px;top:490px;">50,00%</div>
<svg style="left:738.8px;top:526.8px" width="20" height="20" viewBox="0 0 20 20"><path d="M10.00 3.40 L12.15 7.74 L16.94 8.44 L13.47 11.83 L14.29 16.60 L10.00 14.35 L5.71 16.60 L6.53 11.83 L3.06 8.44 L7.85 7.74Z" fill="none" stroke="#222" stroke-width="1.3" stroke-linejoin="round"/></svg>
<div class="c" style="left:768px;top:528px;text-align:left">1.8</div>
<div class="c" style="left:821px;width:126px;top:528px;">BA-B8</div>
<div class="c" style="left:947px;width:113px;top:528px;">4,50</div>
<div class="r" style="left:1068px;width:160px;top:528px">55.000.000,00</div>
<div class="c" style="left:1235px;width:87px;top:528px;">45,00%</div>
<div class="r" style="left:1330px;width:160px;top:528px">24.750.000,00</div>
<div class="c" style="left:1497px;width:88px;top:528px;">55,00%</div>
<div class="r" style="left:1593px;width:160px;top:528px">30.250.000,00</div>
<div class="c" style="left:1760px;width:87px;top:528px;">50,00%</div>
<div class="abs" style="left:391px;top:556px;width:1510px;height:37px;background:#fffdc8"></div>
<svg style="left:402px;top:565px" width="13" height="18" viewBox="0 0 13 18"><circle cx="1.6" cy="1.6" r="1.35" fill="#111"/><circle cx="10.799999999999999" cy="1.6" r="1.35" fill="#111"/><circle cx="1.6" cy="8.7" r="1.35" fill="#111"/><circle cx="10.799999999999999" cy="8.7" r="1.35" fill="#111"/><circle cx="1.6" cy="15.799999999999999" r="1.35" fill="#111"/><circle cx="10.799999999999999" cy="15.799999999999999" r="1.35" fill="#111"/></svg>
<div class="abs" style="left:426px;top:563px;width:22px;height:22px;border-radius:3px;background:#32a0c8"></div>
<svg style="left:430px;top:570px" width="14" height="9" viewBox="0 0 14 9"><path d="M1.5 7.5 L7 2 L12.5 7.5" fill="none" stroke="#fff" stroke-width="2" stroke-linecap="round" stroke-linejoin="round"/></svg>
<div class="gt" style="left:456px;top:565px;transform:scaleX(0.872)">DEVELOPER (API / DB / FE / BE)</div>
<div class="g" style="left:734px;width:87px;top:566px;">2</div>
<div class="g" style="left:821px;width:126px;top:566px;">DE</div>
<div class="g bl" style="left:954px;width:40px;top:566px;font-size:14.3px">1,00</div>
<div class="abs" style="left:1003px;top:562px;width:1px;height:24px;background:#c6c6c6"></div>
<div class="g bl" style="left:1015px;width:40px;top:566px;font-size:14.3px">0,50</div>
<div class="g" style="left:1060px;width:175px;top:566px;">LVT</div>
<div class="g" style="left:1235px;width:87px;top:566px;">%LCB</div>
<div class="g" style="left:1322px;width:175px;top:566px;">LCB</div>
<div class="g" style="left:1497px;width:88px;top:566px;">%KPI</div>
<div class="g" style="left:1585px;width:175px;top:566px;">KPI</div>
<div class="g" style="left:1760px;width:87px;top:566px;">%</div>
<div class="abs" style="left:391px;top:594px;width:343px;height:44px;background:#eff8fe"></div>
<div class="t" style="left:404px;top:611px;font-size:14.8px;color:#333">Lương khởi điểm: <b style="color:#32a0c8">5.500.000,00</b></div>
<div class="t" style="left:401px;top:653px;font-size:14.8px;color:#333">Áp dụng cho:</div>
<div class="abs" style="left:394px;top:678px;width:90px;height:31px;border-radius:16px;background:#f2f3f4"></div>
<div class="t" style="left:407px;top:686px;font-size:14.6px;color:#333">Team Dev</div>
<svg style="left:738.5px;top:602.8px" width="20" height="20" viewBox="0 0 20 20"><path d="M10.00 4.84 L11.88 7.96 L15.42 8.78 L13.04 11.53 L13.35 15.16 L10.00 13.74 L6.65 15.16 L6.96 11.53 L4.58 8.78 L8.12 7.96Z" fill="#ffa000" stroke="#ffa000" stroke-width="2.2" stroke-linejoin="round"/></svg>
<div class="c b" style="left:768px;top:604px;text-align:left">2.1</div>
<div class="c b" style="left:821px;width:126px;top:604px;">DE-B1</div>
<div class="c b" style="left:947px;width:113px;top:604px;">1,00</div>
<div class="r b" style="left:1068px;width:160px;top:604px">13.750.000,00</div>
<div class="c b" style="left:1235px;width:87px;top:604px;">40,00%</div>
<div class="r b" style="left:1330px;width:160px;top:604px">5.500.000,00</div>
<div class="c b" style="left:1497px;width:88px;top:604px;">60,00%</div>
<div class="r b" style="left:1593px;width:160px;top:604px">8.250.000,00</div>
<div class="c b" style="left:1760px;width:87px;top:604px;">50,00%</div>
<svg style="left:738.8px;top:641.8px" width="20" height="20" viewBox="0 0 20 20"><path d="M10.00 3.40 L12.15 7.74 L16.94 8.44 L13.47 11.83 L14.29 16.60 L10.00 14.35 L5.71 16.60 L6.53 11.83 L3.06 8.44 L7.85 7.74Z" fill="none" stroke="#222" stroke-width="1.3" stroke-linejoin="round"/></svg>
<div class="c" style="left:768px;top:643px;text-align:left">2.2</div>
<div class="c" style="left:821px;width:126px;top:643px;">DE-B2</div>
<div class="c" style="left:947px;width:113px;top:643px;">1,50</div>
<div class="r" style="left:1068px;width:160px;top:643px">20.625.000,00</div>
<div class="c" style="left:1235px;width:87px;top:643px;">40,00%</div>
<div class="r" style="left:1330px;width:160px;top:643px">8.250.000,00</div>
<div class="c" style="left:1497px;width:88px;top:643px;">60,00%</div>
<div class="r" style="left:1593px;width:160px;top:643px">12.375.000,00</div>
<div class="c" style="left:1760px;width:87px;top:643px;">50,00%</div>
<svg style="left:738.8px;top:680.3px" width="20" height="20" viewBox="0 0 20 20"><path d="M10.00 3.40 L12.15 7.74 L16.94 8.44 L13.47 11.83 L14.29 16.60 L10.00 14.35 L5.71 16.60 L6.53 11.83 L3.06 8.44 L7.85 7.74Z" fill="none" stroke="#222" stroke-width="1.3" stroke-linejoin="round"/></svg>
<div class="c" style="left:768px;top:682px;text-align:left">2.3</div>
<div class="c" style="left:821px;width:126px;top:682px;">DE-B3</div>
<div class="c" style="left:947px;width:113px;top:682px;">2,00</div>
<div class="r" style="left:1068px;width:160px;top:682px">27.500.000,00</div>
<div class="c" style="left:1235px;width:87px;top:682px;">40,00%</div>
<div class="r" style="left:1330px;width:160px;top:682px">11.000.000,00</div>
<div class="c" style="left:1497px;width:88px;top:682px;">60,00%</div>
<div class="r" style="left:1593px;width:160px;top:682px">16.500.000,00</div>
<div class="c" style="left:1760px;width:87px;top:682px;">50,00%</div>
<svg style="left:738.8px;top:718.8px" width="20" height="20" viewBox="0 0 20 20"><path d="M10.00 3.40 L12.15 7.74 L16.94 8.44 L13.47 11.83 L14.29 16.60 L10.00 14.35 L5.71 16.60 L6.53 11.83 L3.06 8.44 L7.85 7.74Z" fill="none" stroke="#222" stroke-width="1.3" stroke-linejoin="round"/></svg>
<div class="c" style="left:768px;top:720px;text-align:left">2.4</div>
<div class="c" style="left:821px;width:126px;top:720px;">DE-B4</div>
<div class="c" style="left:947px;width:113px;top:720px;">2,50</div>
<div class="r" style="left:1068px;width:160px;top:720px">34.375.000,00</div>
<div class="c" style="left:1235px;width:87px;top:720px;">40,00%</div>
<div class="r" style="left:1330px;width:160px;top:720px">13.750.000,00</div>
<div class="c" style="left:1497px;width:88px;top:720px;">60,00%</div>
<div class="r" style="left:1593px;width:160px;top:720px">20.625.000,00</div>
<div class="c" style="left:1760px;width:87px;top:720px;">50,00%</div>
<svg style="left:738.8px;top:757.8px" width="20" height="20" viewBox="0 0 20 20"><path d="M10.00 3.40 L12.15 7.74 L16.94 8.44 L13.47 11.83 L14.29 16.60 L10.00 14.35 L5.71 16.60 L6.53 11.83 L3.06 8.44 L7.85 7.74Z" fill="none" stroke="#222" stroke-width="1.3" stroke-linejoin="round"/></svg>
<div class="c" style="left:768px;top:759px;text-align:left">2.5</div>
<div class="c" style="left:821px;width:126px;top:759px;">DE-B5</div>
<div class="c" style="left:947px;width:113px;top:759px;">3,00</div>
<div class="r" style="left:1068px;width:160px;top:759px">41.250.000,00</div>
<div class="c" style="left:1235px;width:87px;top:759px;">40,00%</div>
<div class="r" style="left:1330px;width:160px;top:759px">16.500.000,00</div>
<div class="c" style="left:1497px;width:88px;top:759px;">60,00%</div>
<div class="r" style="left:1593px;width:160px;top:759px">24.750.000,00</div>
<div class="c" style="left:1760px;width:87px;top:759px;">50,00%</div>
<svg style="left:738.8px;top:796.3px" width="20" height="20" viewBox="0 0 20 20"><path d="M10.00 3.40 L12.15 7.74 L16.94 8.44 L13.47 11.83 L14.29 16.60 L10.00 14.35 L5.71 16.60 L6.53 11.83 L3.06 8.44 L7.85 7.74Z" fill="none" stroke="#222" stroke-width="1.3" stroke-linejoin="round"/></svg>
<div class="c" style="left:768px;top:798px;text-align:left">2.6</div>
<div class="c" style="left:821px;width:126px;top:798px;">DE-B6</div>
<div class="c" style="left:947px;width:113px;top:798px;">3,50</div>
<div class="r" style="left:1068px;width:160px;top:798px">48.125.000,00</div>
<div class="c" style="left:1235px;width:87px;top:798px;">40,00%</div>
<div class="r" style="left:1330px;width:160px;top:798px">19.250.000,00</div>
<div class="c" style="left:1497px;width:88px;top:798px;">60,00%</div>
<div class="r" style="left:1593px;width:160px;top:798px">28.875.000,00</div>
<div class="c" style="left:1760px;width:87px;top:798px;">50,00%</div>
<svg style="left:738.8px;top:834.8px" width="20" height="20" viewBox="0 0 20 20"><path d="M10.00 3.40 L12.15 7.74 L16.94 8.44 L13.47 11.83 L14.29 16.60 L10.00 14.35 L5.71 16.60 L6.53 11.83 L3.06 8.44 L7.85 7.74Z" fill="none" stroke="#222" stroke-width="1.3" stroke-linejoin="round"/></svg>
<div class="c" style="left:768px;top:836px;text-align:left">2.7</div>
<div class="c" style="left:821px;width:126px;top:836px;">DE-B7</div>
<div class="c" style="left:947px;width:113px;top:836px;">4,00</div>
<div class="r" style="left:1068px;width:160px;top:836px">55.000.000,00</div>
<div class="c" style="left:1235px;width:87px;top:836px;">40,00%</div>
<div class="r" style="left:1330px;width:160px;top:836px">22.000.000,00</div>
<div class="c" style="left:1497px;width:88px;top:836px;">60,00%</div>
<div class="r" style="left:1593px;width:160px;top:836px">33.000.000,00</div>
<div class="c" style="left:1760px;width:87px;top:836px;">50,00%</div>
<div class="hl" style="left:391px;top:554px;width:1510px;background:#d4d4d4"></div>
<div class="hl" style="left:734px;top:285px;width:1167px"></div>
<div class="hl" style="left:734px;top:323px;width:1167px"></div>
<div class="hl" style="left:734px;top:362px;width:1167px"></div>
<div class="hl" style="left:734px;top:400px;width:1167px"></div>
<div class="hl" style="left:734px;top:439px;width:1167px"></div>
<div class="hl" style="left:734px;top:478px;width:1167px"></div>
<div class="hl" style="left:734px;top:516px;width:1167px"></div>
<div class="hl" style="left:734px;top:631px;width:1167px"></div>
<div class="hl" style="left:734px;top:670px;width:1167px"></div>
<div class="hl" style="left:734px;top:708px;width:1167px"></div>
<div class="hl" style="left:734px;top:747px;width:1167px"></div>
<div class="hl" style="left:734px;top:786px;width:1167px"></div>
<div class="hl" style="left:734px;top:824px;width:1167px"></div>
<div class="hl" style="left:391px;top:209px;width:1510px"></div>
<div class="hl" style="left:391px;top:246px;width:1510px"></div>
<div class="hl" style="left:391px;top:555px;width:1510px"></div>
<div class="hl" style="left:391px;top:593px;width:1510px"></div>
<div class="hl" style="left:1901px;top:209px;width:11px"></div>
<div class="vl" style="left:734px;top:171px;height:682px"></div>
<div class="vl" style="left:821px;top:171px;height:682px"></div>
<div class="vl" style="left:947px;top:171px;height:682px"></div>
<div class="vl" style="left:1060px;top:171px;height:682px"></div>
<div class="vl" style="left:1235px;top:171px;height:682px"></div>
<div class="vl" style="left:1322px;top:209px;height:644px"></div>
<div class="vl" style="left:1497px;top:209px;height:644px"></div>
<div class="vl" style="left:1585px;top:209px;height:644px"></div>
<div class="vl" style="left:1760px;top:171px;height:682px"></div>
<div class="vl" style="left:1847px;top:209px;height:644px"></div>
<div class="abs" style="left:391px;top:853px;width:1521px;height:17px;background:#fff"></div>
<div class="abs" style="left:391px;top:853px;width:1510px;height:13px;background:#ededed"></div>
<div class="abs" style="left:1860px;top:853px;width:42px;height:13px;background:#dcdcdc"></div>
<div class="abs" style="left:392px;top:854px;width:812px;height:11px;border-radius:6px;background:#c1c1c1"></div>
<div class="abs" style="left:1867px;top:854px;width:0;height:0;border-top:5px solid transparent;border-bottom:5px solid transparent;border-right:8px solid #adadad"></div>
<div class="abs" style="left:1887px;top:854px;width:0;height:0;border-top:5px solid transparent;border-bottom:5px solid transparent;border-left:8px solid #adadad"></div>
<div class="abs" style="left:1902px;top:210px;width:10px;height:643px;background:linear-gradient(90deg,#f0f0f0,#d9d9d9)"></div>
<div class="abs" style="left:1902px;top:811px;width:10px;height:42px;background:linear-gradient(90deg,#e2e2e2,#d2d2d2)"></div>
<div class="abs" style="left:1902px;top:210px;width:11px;height:201px;border-radius:5px 0 0 5px / 6px 0 0 6px;background:linear-gradient(90deg,#c6c6c6,#b2b2b2)"></div>
<div class="abs" style="left:1903px;top:818px;width:0;height:0;border-left:5px solid transparent;border-right:5px solid transparent;border-bottom:8px solid #adadad"></div>
<div class="abs" style="left:1903px;top:838px;width:0;height:0;border-left:5px solid transparent;border-right:5px solid transparent;border-top:8px solid #adadad"></div>
<div class="abs" style="left:1902px;top:853px;width:12px;height:12px;border-radius:6px;background:#e2e2e2"></div>
<div class="vl" style="left:1901px;top:209px;height:644px"></div>
<div class="hl" style="left:391px;top:171px;width:1521px"></div>
<div class="vl" style="left:390px;top:172px;height:698px;background:#ababab"></div>
<div class="hl" style="left:390px;top:870px;width:1522px;background:#d0d0d0"></div>
<div class="abs" style="left:1856px;top:202px;width:39px;height:53px;border:5px solid #e5191c"></div>
<svg style="left:1691px;top:886px" width="10" height="14" viewBox="0 0 10 14"><path d="M8.6 1.5 L1.8 7 L8.6 12.5" fill="none" stroke="#bbb" stroke-width="1.3"/></svg>
<div class="abs" style="left:1711px;top:878px;width:30px;height:29px;border:1px solid #32a0c8;border-radius:2px;background:#fff"></div>
<div class="t" style="left:1711px;width:30px;text-align:center;top:885px;font-size:17px;font-weight:700;color:#32a0c8">1</div>
<svg style="left:1752px;top:886px" width="10" height="14" viewBox="0 0 10 14"><path d="M1.4 1.5 L8.2 7 L1.4 12.5" fill="none" stroke="#bbb" stroke-width="1.3"/></svg>
<div class="abs" style="left:1771px;top:877px;width:131px;height:30px;border:1px solid #767676;border-radius:4px;background:#fff"></div>
<div class="t" style="left:1787px;top:884.5px;font-size:17.3px;color:#222">10 / Trang</div>
<div class="abs" style="left:1871px;top:888.5px;width:0;height:0;border-left:7px solid transparent;border-right:7px solid transparent;border-top:7.5px solid #181818"></div>
</body></html>
